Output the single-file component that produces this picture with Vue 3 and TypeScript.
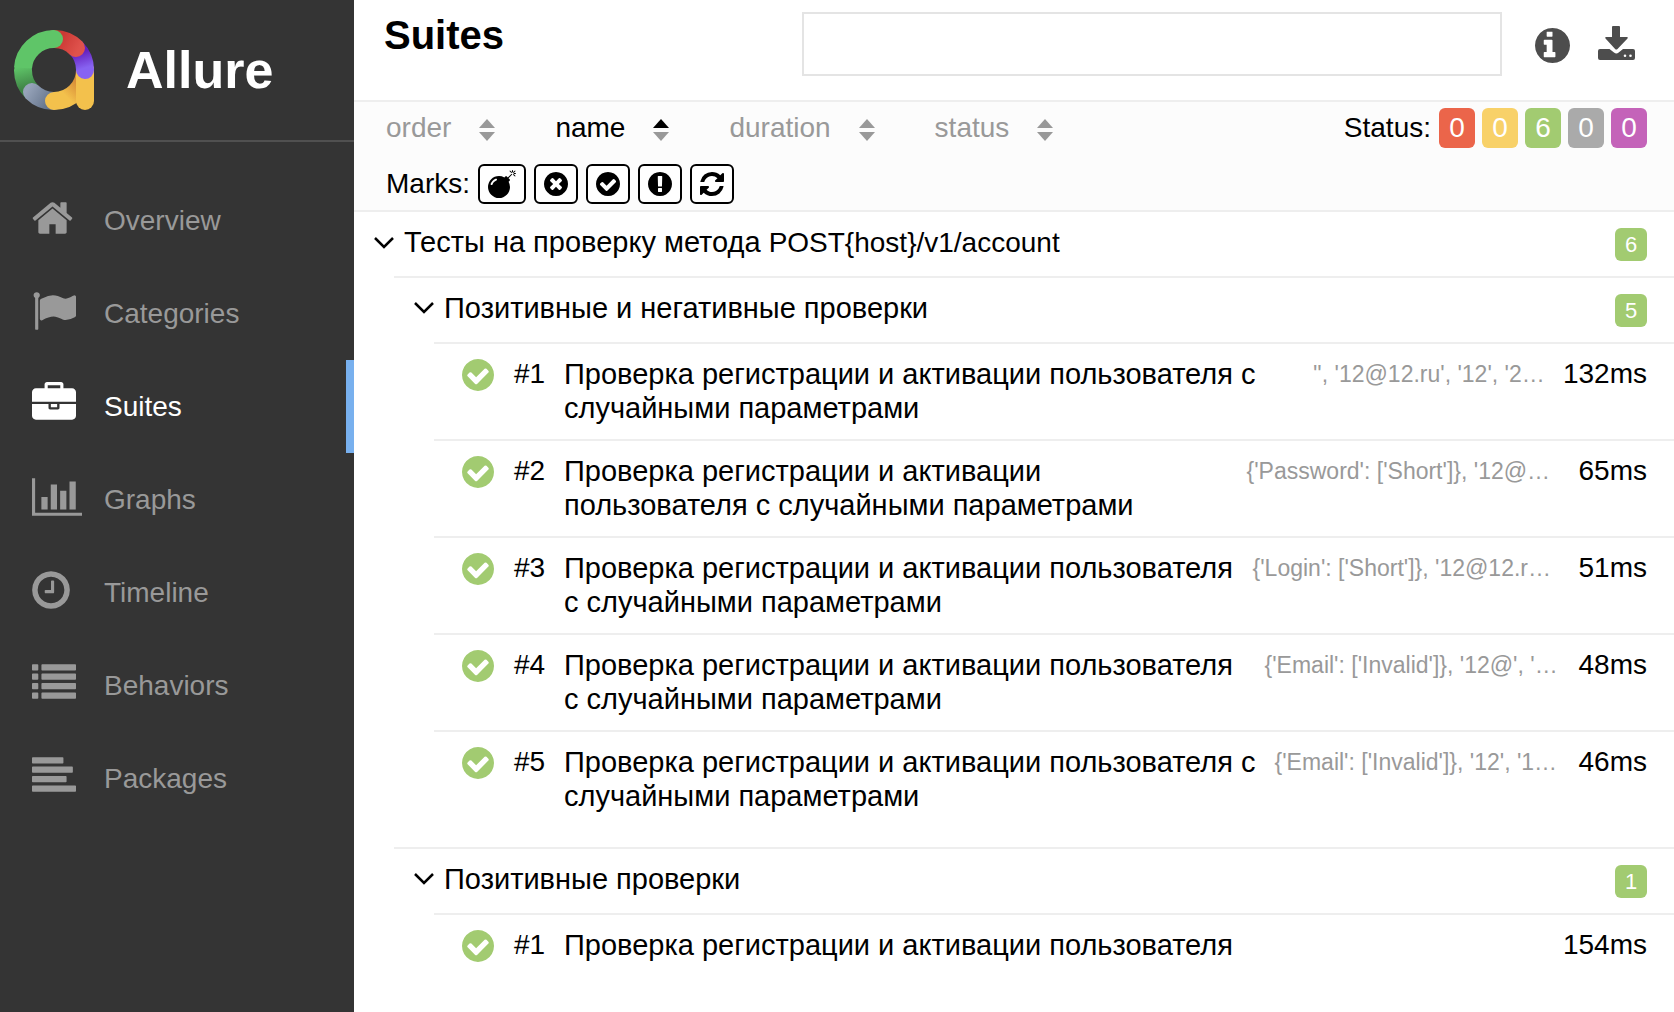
<script setup lang="ts">
import { ref } from 'vue'

interface Shape {
  box: string
  width: number
  height: number
  d: string
}

interface NavItem {
  label: string
  icon: Shape
}

interface TestCase {
  order: number
  name: string
  params: string
  paramsWidth: number
  duration: string
}

interface Group {
  name: string
  tests: TestCase[]
}

const disc =
  'q0 209-103 385.5t-279.5 279.5-385.5 103-385.5-103-279.5-279.5-103-385.5 103-385.5 279.5-279.5 385.5-103 385.5 103 279.5 279.5 103 385.5z'

const checkPath =
  'M1412 734q0-28-18-46l-91-90q-19-19-45-19t-45 19l-408 407-226-226q-19-19-45-19t-45 19l-91 90q-18 18-18 46 0 27 18 45l362 362q19 19 45 19 27 0 46-19l543-543q18-18 18-45zm252 162' + disc

const infoPath =
  'M1024 1376v-160q0-14-9-23t-23-9h-96v-512q0-14-9-23t-23-9h-320q-14 0-23 9t-9 23v160q0 14 9 23t23 9h96v320h-96q-14 0-23 9t-9 23v160q0 14 9 23t23 9h448q14 0 23-9t9-23zM896 480v-160q0-14-9-23t-23-9h-192q-14 0-23 9t-9 23v160q0 14 9 23t23 9h192q14 0 23-9t9-23zM1664 896' + disc

function bar(x: number, y: number, width: number): string {
  return `M${x + 32} ${y}h${width - 64}q32 0 32 32v192q0 32-32 32h-${width - 64}q-32 0-32-32v-192q0-32 32-32z`
}

const rowTops = [128, 512, 896, 1280]
const listPath = rowTops.map((y) => bar(0, y, 256) + bar(384, y, 1408)).join('')
const alignPath = [1280, 1664, 1408, 1792].map((w, i) => bar(0, rowTops[i], w)).join('')

const navItems: NavItem[] = [
  {
    label: 'Overview',
    icon: {
      box: '64 0 1664 1792',
      width: 41,
      height: 44,
      d: 'M1472 992v480q0 26-19 45t-45 19h-384v-384h-256v384h-384q-26 0-45-19t-19-45v-480q0-1 .5-3t.5-3l575-474 575 474q1 2 1 6zm223-69l-62 74q-8 9-21 11h-3q-13 0-21-7l-692-577-692 577q-12 8-24 7-13-2-21-11l-62-74q-8-10-7-23.5t11-21.5l719-599q32-26 76-26t76 26l244 204v-195q0-14 9-23t23-9h192q14 0 23 9t9 23v408l219 182q10 8 11 21.5t-7 23.5z',
    },
  },
  {
    label: 'Categories',
    icon: {
      box: '0 0 1792 1792',
      width: 44,
      height: 44,
      d: 'M320 256q0 72-64 110v1266q0 13-9.5 22.5t-22.5 9.5h-64q-13 0-22.5-9.5t-9.5-22.5v-1266q-64-38-64-110 0-53 37.5-90.5t90.5-37.5 90.5 37.5 37.5 90.5zm1472 64v763q0 25-12.5 38.5t-39.5 27.5q-215 116-369 116-61 0-123.5-22t-108.5-48-115.5-48-142.5-22q-192 0-464 146-17 9-33 9-26 0-45-19t-19-45v-742q0-32 31-55 21-14 79-43 236-120 421-120 107 0 200 29t219 88q38 19 88 19 54 0 117.5-21t110-47 88-47 54.5-21q26 0 45 19t19 45z',
    },
  },
  {
    label: 'Suites',
    icon: {
      box: '0 0 1792 1792',
      width: 44,
      height: 44,
      d: 'M640 256h512v-128h-512v128zm1152 640v480q0 66-47 113t-113 47h-1472q-66 0-113-47t-47-113v-480h672v160q0 26 19 45t45 19h320q26 0 45-19t19-45v-160h672zm-768 0v128h-256v-128h256zm768-480v384h-1792v-384q0-66 47-113t113-47h352v-160q0-40 28-68t68-28h576q40 0 68 28t28 68v160h352q66 0 113 47t47 113z',
    },
  },
  {
    label: 'Graphs',
    icon: {
      box: '0 0 2048 1792',
      width: 50,
      height: 44,
      d: 'M640 896v512h-256v-512h256zm384-512v1024h-256v-1024h256zm1024 1152v128h-2048v-1536h128v1408h1920zm-640-896v768h-256v-768h256zm384-384v1152h-256v-1152h256z',
    },
  },
  {
    label: 'Timeline',
    icon: {
      box: '128 0 1536 1792',
      width: 38,
      height: 44,
      d: 'M1024 544v448q0 14-9 23t-23 9h-320q-14 0-23-9t-9-23v-64q0-14 9-23t23-9h224v-352q0-14 9-23t23-9h64q14 0 23 9t9 23zm416 352q0-148-73-273t-198-198-273-73-273 73-198 198-73 273 73 273 198 198 273 73 273-73 198-198 73-273zm224 0' + disc,
    },
  },
  { label: 'Behaviors', icon: { box: '0 0 1792 1792', width: 44, height: 44, d: listPath } },
  { label: 'Packages', icon: { box: '0 0 1792 1792', width: 44, height: 44, d: alignPath } },
]

const sorters = ['order', 'name', 'duration', 'status']
const activeSorter = ref('name')

const statuses = [
  { name: 'failed', count: 0 },
  { name: 'broken', count: 0 },
  { name: 'passed', count: 6 },
  { name: 'skipped', count: 0 },
  { name: 'unknown', count: 0 },
]

const marks: { name: string; icon: Shape }[] = [
  {
    name: 'Flaky',
    icon: {
      box: '0 0 1792 1792',
      width: 28,
      height: 28,
      d: 'M571 589q-10-25-34-35t-49 0q-108 44-191 127t-127 191q-10 25 0 49t35 34q13 5 24 5 42 0 60-40 34-84 98.5-148.5t148.5-98.5q25-11 35-35t0-49zm942-356l46 46-244 243 68 68q19 19 19 45.5t-19 45.5l-64 64q89 161 89 343 0 143-55.5 273.5t-150 225-225 150-273.5 55.5-273.5-55.5-225-150-150-225-55.5-273.5 55.5-273.5 150-225 225-150 273.5-55.5q182 0 343 89l64-64q19-19 45.5-19t45.5 19l68 68zm8-56q-10 10-22 10-13 0-23-10l-91-90q-9-10-9-23t9-23q10-9 23-9t23 9l90 91q10 9 10 22.5t-10 22.5zm230 230q-11 9-23 9-13 0-23-9l-90-91q-10-9-10-22.5t10-22.5q9-10 22.5-10t22.5 10l91 90q9 10 9 23t-9 23zm41-183q0 14-9 23t-23 9h-96q-14 0-23-9t-9-23 9-23 23-9h96q14 0 23 9t9 23zm-192-192v96q0 14-9 23t-23 9-23-9-9-23v-96q0-14 9-23t23-9 23 9 9 23zm151 55l-91 90q-10 10-22 10-13 0-23-10-10-9-10-22.5t10-22.5l90-91q10-9 23-9t23 9q9 10 9 23t-9 23z',
    },
  },
  {
    name: 'New failed',
    icon: {
      box: '128 128 1536 1536',
      width: 24,
      height: 24,
      d: 'M1277 1122q0-26-19-45l-181-181 181-181q19-19 19-45 0-27-19-46l-90-90q-19-19-46-19-26 0-45 19l-181 181-181-181q-19-19-45-19-27 0-46 19l-90 90q-19 19-19 46 0 26 19 45l181 181-181 181q-19 19-19 45 0 27 19 46l90 90q19 19 46 19 26 0 45-19l181-181 181 181q19 19 45 19 27 0 46-19l90-90q19-19 19-46zm387-226' + disc,
    },
  },
  { name: 'New passed', icon: { box: '128 128 1536 1536', width: 24, height: 24, d: checkPath } },
  {
    name: 'New broken',
    icon: {
      box: '128 128 1536 1536',
      width: 24,
      height: 24,
      d: 'M896 128q209 0 385.5 103t279.5 279.5 103 385.5-103 385.5-279.5 279.5-385.5 103-385.5-103-279.5-279.5-103-385.5 103-385.5 279.5-279.5 385.5-103zm128 1247v-190q0-14-9-23.5t-22-9.5h-192q-13 0-23 10t-10 23v190q0 13 10 23t23 10h192q13 0 22-9.5t9-23.5zm-2-344l18-621q0-12-10-18-10-8-24-8h-220q-14 0-24 8-10 6-10 18l17 621q0 10 10 17.5t24 7.5h185q14 0 23.5-7.5t10.5-17.5z',
    },
  },
  {
    name: 'Retries',
    icon: {
      box: '128 128 1536 1536',
      width: 24,
      height: 24,
      d: 'M1639 1056q0 5-1 7-64 268-268 434.5t-478 166.5q-146 0-282.5-55t-243.5-157l-129 129q-19 19-45 19t-45-19-19-45v-448q0-26 19-45t45-19h448q26 0 45 19t19 45-19 45l-137 137q71 66 161 102t187 36q134 0 250-65t186-179q11-17 53-117 8-23 30-23h192q13 0 22.5 9.5t9.5 22.5zm25-800v448q0 26-19 45t-45 19h-448q-26 0-45-19t-19-45 19-45l138-138q-148-137-349-137-134 0-250 65t-186 179q-11 17-53 117-8 23-30 23h-199q-13 0-22.5-9.5t-9.5-22.5v-7q65-268 270-434.5t480-166.5q146 0 284 55.5t245 156.5l130-129q19-19 45-19t45 19 19 45z',
    },
  },
]

const longName = 'Проверка регистрации и активации пользователя с случайными параметрами'

const groups: Group[] = [
  {
    name: 'Позитивные и негативные проверки',
    tests: [
      { order: 1, name: longName, params: "'', '12@12.ru', '12', '2…", paramsWidth: 234, duration: '132ms' },
      { order: 2, name: longName, params: "{'Password': ['Short']}, '12@…", paramsWidth: 316, duration: '65ms' },
      { order: 3, name: longName, params: "{'Login': ['Short']}, '12@12.r…", paramsWidth: 310, duration: '51ms' },
      { order: 4, name: longName, params: "{'Email': ['Invalid']}, '12@', '…", paramsWidth: 298, duration: '48ms' },
      { order: 5, name: longName, params: "{'Email': ['Invalid']}, '12', '1…", paramsWidth: 288, duration: '46ms' },
    ],
  },
  {
    name: 'Позитивные проверки',
    tests: [
      {
        order: 1,
        name: 'Проверка регистрации и активации пользователя',
        params: '',
        paramsWidth: 0,
        duration: '154ms',
      },
    ],
  },
]
</script>

<template>
  <div class="app">
    <aside class="side">
      <a class="brand" href="#">
        <svg class="logo" width="80" height="80" viewBox="0 0 80 80" fill="none" stroke-width="18" stroke-linecap="round" aria-hidden="true">
          <defs>
            <linearGradient id="g-green" gradientUnits="userSpaceOnUse" x1="9" y1="36" x2="15" y2="58">
              <stop offset="0" stop-color="#5fc568" />
              <stop offset="1" stop-color="#3f8246" />
            </linearGradient>
            <linearGradient id="g-grey" gradientUnits="userSpaceOnUse" x1="14" y1="58" x2="36" y2="72">
              <stop offset="0" stop-color="#97a4ba" />
              <stop offset="1" stop-color="#66758c" />
            </linearGradient>
            <linearGradient id="g-yellow" gradientUnits="userSpaceOnUse" x1="52" y1="66" x2="64" y2="54">
              <stop offset="0" stop-color="#f3c14c" />
              <stop offset="1" stop-color="#d98f38" />
            </linearGradient>
            <linearGradient id="g-purple" gradientUnits="userSpaceOnUse" x1="66" y1="22" x2="71" y2="38">
              <stop offset="0" stop-color="#651fbd" />
              <stop offset="1" stop-color="#8763f1" />
            </linearGradient>
            <linearGradient id="g-red" gradientUnits="userSpaceOnUse" x1="46" y1="10" x2="64" y2="20">
              <stop offset="0" stop-color="#cb3934" />
              <stop offset="1" stop-color="#df524c" />
            </linearGradient>
          </defs>
          <path d="M9 40A31 31 0 0 0 18 62" stroke="url(#g-green)" />
          <path d="M40 71A31 31 0 0 1 18 62" stroke="url(#g-grey)" />
          <path d="M71 40A31 31 0 0 1 40 71" stroke="url(#g-yellow)" />
          <path d="M71 40V71" stroke="#f3c14c" />
          <path d="M62 18A31 31 0 0 1 71 40" stroke="url(#g-purple)" />
          <path d="M40 9A31 31 0 0 1 62 18" stroke="url(#g-red)" />
          <path d="M9 38A31 31 0 0 1 40 9" stroke="#5fc568" stroke-linecap="butt" />
          <circle cx="40" cy="9" r="9" fill="#5fc568" />
        </svg>
        <span class="brand-name">Allure</span>
      </a>
      <nav class="nav" aria-label="Report sections">
        <a
          v-for="item in navItems"
          :key="item.label"
          class="nav-item"
          :class="{ active: item.label === 'Suites' }"
          href="#"
        >
          <span class="nav-icon">
            <svg :width="item.icon.width" :height="item.icon.height" :viewBox="item.icon.box" aria-hidden="true">
              <path :d="item.icon.d" fill="currentColor" />
            </svg>
          </span>
          <span class="nav-label">{{ item.label }}</span>
        </a>
      </nav>
    </aside>

    <main class="content">
      <header class="head">
        <h1 class="title">Suites</h1>
        <input class="search" type="text" aria-label="Search" />
        <button class="tool" type="button" aria-label="Show info">
          <svg width="35" height="38" viewBox="128 -4 1536 1668" aria-hidden="true">
            <path :d="infoPath" fill="currentColor" />
          </svg>
        </button>
        <button class="tool" type="button" aria-label="Download CSV">
          <svg width="37" height="40" viewBox="0 0 37 40" fill="currentColor" aria-hidden="true">
            <path d="M15 2H21Q22 2 22 3V13H29Q30.500 13 29.500 14.500L19.500 25Q18.300 26 17.100 25L7.500 14.500Q6.500 13 8 13H14V3Q14 2 15 2Z" />
            <path
              fill-rule="evenodd"
              d="M2 25H11.500L16 28.500Q18.300 30.500 20.700 28.500L25 25H35Q37 25 37 27V34Q37 36 35 36H2Q0 36 0 34V27Q0 25 2 25ZM25.700 31.700A1.300 1.300 0 1 0 28.300 31.700A1.300 1.300 0 1 0 25.700 31.700ZM31.200 31.700A1.300 1.300 0 1 0 33.800 31.700A1.300 1.300 0 1 0 31.200 31.700Z"
            />
          </svg>
        </button>
      </header>

      <section class="toolbar" aria-label="Sorting and filters">
        <div class="bar-row">
          <div class="sorters">
            <button
              v-for="name in sorters"
              :key="name"
              class="sorter"
              :class="{ active: name === activeSorter }"
              type="button"
              @click="activeSorter = name"
            >
              <span>{{ name }}</span>
              <svg class="arrows" width="16" height="22" viewBox="0 0 16 22" aria-hidden="true">
                <path class="up" d="M0 9L8 0L16 9Z" />
                <path class="down" d="M0 13L8 22L16 13Z" />
              </svg>
            </button>
          </div>
          <div class="filter">
            <span>Status:</span>
            <button
              v-for="status in statuses"
              :key="status.name"
              class="status"
              :class="status.name"
              type="button"
              :aria-label="`${status.name}: ${status.count}`"
            >{{ status.count }}</button>
          </div>
        </div>
        <div class="filter">
          <span>Marks:</span>
          <button v-for="mark in marks" :key="mark.name" class="mark" type="button" :aria-label="mark.name">
            <svg :width="mark.icon.width" :height="mark.icon.height" :viewBox="mark.icon.box" aria-hidden="true">
              <path :d="mark.icon.d" fill="currentColor" />
            </svg>
          </button>
        </div>
      </section>

      <section class="tree">
        <div class="group-head">
          <button class="toggle" type="button" aria-expanded="true">
            <svg class="chevron" width="20" height="14" viewBox="0 0 20 14" aria-hidden="true">
              <path d="M1 2L10 11L19 2" stroke-width="2.5" />
            </svg>
            <span>Тесты на проверку метода <span class="endpoint">POST{host}/v1/account</span></span>
          </button>
          <span class="count">6</span>
        </div>
        <div class="children">
          <div v-for="group in groups" :key="group.name" class="group">
            <div class="group-head">
              <button class="toggle" type="button" aria-expanded="true">
                <svg class="chevron" width="20" height="14" viewBox="0 0 20 14" aria-hidden="true">
                  <path d="M1 2L10 11L19 2" stroke-width="2.5" />
                </svg>
                <span>{{ group.name }}</span>
              </button>
              <span class="count">{{ group.tests.length }}</span>
            </div>
            <div class="children tests">
              <a v-for="test in group.tests" :key="test.order" class="test" href="#">
                <svg class="passed-icon" width="32" height="32" viewBox="128 128 1536 1536" aria-hidden="true">
                  <path :d="checkPath" fill="currentColor" />
                </svg>
                <span class="order">#{{ test.order }}</span>
                <span class="name">{{ test.name }}</span>
                <span v-if="test.params" class="params" :style="{ width: test.paramsWidth + 'px' }">{{ test.params }}</span>
                <span class="duration">{{ test.duration }}</span>
              </a>
            </div>
          </div>
        </div>
      </section>
    </main>
  </div>
</template>

<style>
body {
  margin: 0;
  background: #fff;
}
</style>

<style scoped>
.app {
  display: flex;
  min-height: 100vh;
  font-family: "Liberation Sans", Arial, sans-serif;
  font-size: 28px;
  line-height: 34px;
  color: #000;
}

.app * {
  box-sizing: border-box;
}

svg {
  display: block;
  flex: none;
}

a {
  color: inherit;
  text-decoration: none;
}

button {
  margin: 0;
  padding: 0;
  border: 0;
  background: none;
  color: inherit;
  font: inherit;
  cursor: pointer;
}

.side {
  flex: none;
  width: 354px;
  background: #343434;
  color: #999;
}

.brand {
  display: flex;
  align-items: center;
  gap: 32px;
  padding: 30px 14px;
  border-bottom: 2px solid #505050;
}

.brand-name {
  color: #fff;
  font-size: 52px;
  font-weight: bold;
  line-height: 60px;
}

.nav {
  padding-top: 32px;
}

.nav-item {
  display: flex;
  gap: 20px;
  height: 93px;
  padding: 22px 24px 0 32px;
  border-right: 8px solid transparent;
}

.nav-item.active {
  border-right-color: #78b0ee;
  color: #fff;
}

.nav-icon {
  flex: none;
  width: 52px;
}

.nav-label {
  line-height: 50px;
}

.content {
  flex: 1;
  min-width: 0;
}

.head {
  display: flex;
  align-items: flex-start;
  padding: 12px 39px 24px 30px;
  border-bottom: 2px solid #eee;
}

.title {
  flex: 1;
  margin: 0;
  font-size: 40px;
  line-height: 46px;
}

.search {
  flex: 0 1 700px;
  min-width: 0;
  height: 64px;
  padding: 0 16px;
  border: 2px solid #e4e4e4;
  background: #fff;
  font: inherit;
  outline: 0;
}

.tool {
  display: flex;
  align-items: center;
  height: 64px;
  margin-left: 33px;
  color: #4d4d4d;
}

.tool + .tool {
  margin-left: 28px;
}

.toolbar {
  display: flex;
  flex-direction: column;
  gap: 16px;
  padding: 6px 27px 6px 32px;
  border-bottom: 2px solid #eee;
  background: #fcfcfc;
}

.bar-row {
  display: flex;
  justify-content: space-between;
}

.sorters {
  display: flex;
  gap: 60px;
}

.sorter {
  display: flex;
  align-items: center;
  gap: 28px;
  height: 40px;
  color: #999;
}

.sorter.active {
  color: #000;
}

.arrows {
  margin-top: 4px;
  fill: #999;
}

.sorter.active .up {
  fill: #000;
}

.filter {
  display: flex;
  align-items: center;
  gap: 8px;
  height: 40px;
}

.status {
  width: 36px;
  height: 40px;
  border-radius: 6px;
  color: #fff;
}

.status + .status {
  margin-left: -1px;
}

.failed {
  background: #eb654a;
}

.broken {
  background: #f8d168;
}

.passed {
  background: #a2cb71;
}

.skipped {
  background: #aaa;
}

.unknown {
  background: #c463b9;
}

.mark {
  display: flex;
  align-items: center;
  height: 40px;
  padding: 0 8px;
  border: 2px solid #000;
  border-radius: 6px;
  background: #fff;
}

.group-head {
  display: flex;
  align-items: flex-start;
  justify-content: space-between;
  height: 64px;
  padding: 13px 27px 0 20px;
}

.toggle {
  display: flex;
  align-items: center;
  gap: 10px;
  font-size: 29px;
  text-align: left;
}

.endpoint {
  font-size: 28px;
}

.chevron {
  fill: none;
  stroke: #000;
}

.count {
  width: 32px;
  height: 33px;
  margin-top: 3px;
  border-radius: 6px;
  background: #a2cb71;
  color: #fff;
  font-size: 22px;
  line-height: 33px;
  text-align: center;
}

.children {
  margin-left: 40px;
}

.group,
.test {
  border-top: 2px solid #eee;
}

.tests {
  padding-bottom: 20px;
}

.test {
  display: flex;
  align-items: flex-start;
  padding: 13px 27px 14px 28px;
}

.passed-icon {
  margin: 2px 20px 0 0;
  color: #a2cb71;
}

.order {
  flex: none;
  width: 50px;
}

.name {
  flex: 1;
  min-width: 0;
  font-size: 29px;
}

.params {
  flex: none;
  margin-left: 16px;
  color: #999;
  font-size: 23px;
  white-space: nowrap;
}

.duration {
  flex: none;
  margin-left: 16px;
}
</style>
